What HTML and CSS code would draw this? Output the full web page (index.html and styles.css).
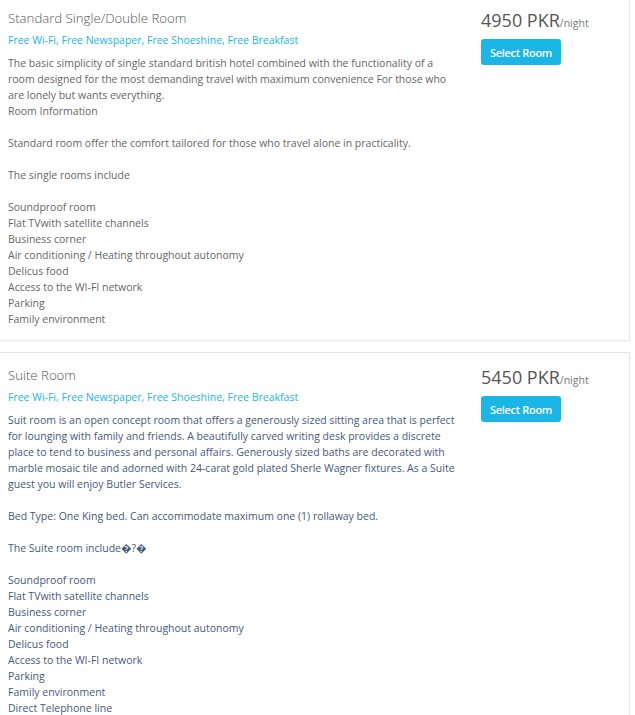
FILE: index.html
```html
<!DOCTYPE html>
<html>
<head>
<meta charset="utf-8">
<link rel="stylesheet" href="styles.css">
</head>
<body>
<div class="list">
  <div class="room">
    <div class="info">
      <h2 class="title">Standard Single/Double Room</h2>
      <div class="amen">Free Wi-Fi, Free Newspaper, Free Shoeshine, Free Breakfast</div>
      <p class="desc">The basic simplicity of single standard british hotel combined with the functionality of a room designed for the most demanding travel with maximum convenience For those who are lonely but wants everything.<br>Room Information<br><br>Standard room offer the comfort tailored for those who travel alone in practicality.<br><br>The single rooms include<br><br>Soundproof room<br>Flat TVwith satellite channels<br>Business corner<br>Air conditioning / Heating throughout autonomy<br>Delicus food<br>Access to the WI-FI network<br>Parking<br>Family environment</p>
    </div>
    <div class="side">
      <div class="price">4950 PKR<span class="per">/night</span></div>
      <button class="btn">Select Room</button>
    </div>
  </div>
  <div class="room">
    <div class="info">
      <h2 class="title">Suite Room</h2>
      <div class="amen">Free Wi-Fi, Free Newspaper, Free Shoeshine, Free Breakfast</div>
      <p class="desc blue">Suit room is an open concept room that offers a generously sized sitting area that is perfect for lounging with family and friends. A beautifully carved writing desk provides a discrete place to tend to business and personal affairs. Generously sized baths are decorated with marble mosaic tile and adorned with 24-carat gold plated Sherle Wagner fixtures. As a Suite guest you will enjoy Butler Services.<br><br>Bed Type: One King bed. Can accommodate maximum one (1) rollaway bed.<br><br>The Suite room include&#xFFFD;?&#xFFFD;<br><br>Soundproof room<br>Flat TVwith satellite channels<br>Business corner<br>Air conditioning / Heating throughout autonomy<br>Delicus food<br>Access to the WI-FI network<br>Parking<br>Family environment<br>Direct Telephone line</p>
    </div>
    <div class="side">
      <div class="price">5450 PKR<span class="per">/night</span></div>
      <button class="btn">Select Room</button>
    </div>
  </div>
</div>
</body>
</html>
```
FILE: styles.css
```css
html, body {
  margin: 0;
  padding: 0;
  background: #fff;
  font-family: "Open Sans", "Liberation Sans", sans-serif;
}
.list {
  margin-top: -5px;
  width: 630px;
  display: flex;
  flex-direction: column;
  gap: 11px;
}
.room {
  display: grid;
  grid-template-columns: 473px 1fr;
  border: 1px solid #e6e6e6;
  border-left: 0;
  padding: 11px 0 13px 8px;
}
.info {
  padding-right: 23px;
}
.title {
  margin: 0;
  font-size: 13.2px;
  font-weight: 300;
  color: #555;
  line-height: 22px;
}
.amen {
  font-size: 10.5px;
  color: #1ab6e6;
  line-height: 16px;
  margin-top: 3px;
}
.desc {
  margin: 7px 0 0;
  font-size: 10.5px;
  line-height: 16px;
  color: #666;
}
.desc.blue {
  color: #3f5a7e;
}
.side {
  padding-top: 1px;
}
.price {
  font-size: 18px;
  color: #555;
  line-height: 24px;
}
.per {
  font-size: 10.5px;
  color: #777;
  line-height: 1;
}
.btn {
  margin-top: 7px;
  display: block;
  width: 80px;
  height: 26px;
  border: 0;
  border-radius: 3px;
  background: #1ab6e6;
  color: #fff;
  font-family: "Open Sans", sans-serif;
  font-size: 11px;
  font-weight: 600;
  letter-spacing: -0.3px;
  padding: 0;
}
```
